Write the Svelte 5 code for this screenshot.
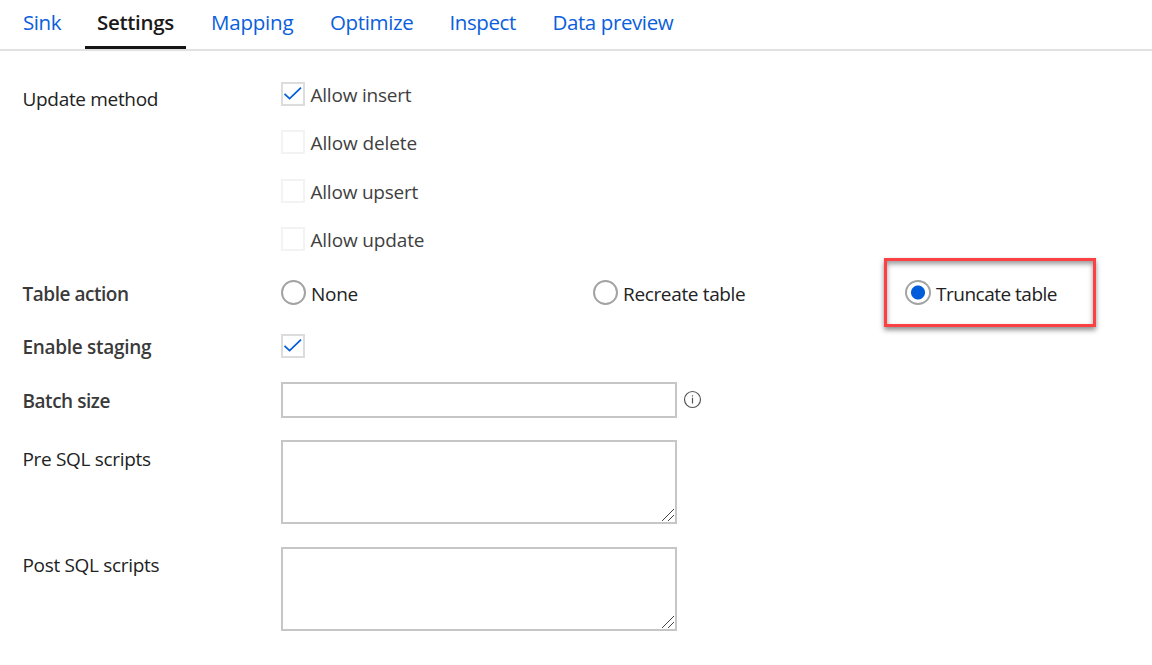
<script>
  const tabs = [
    { name: 'Sink', width: 37, spacing: -0.4 },
    { name: 'Settings', width: 77, spacing: -0.3 },
    { name: 'Mapping', width: 82, spacing: -0.2 },
    { name: 'Optimize', width: 82.5, spacing: -0.35 },
    { name: 'Inspect', width: 66, spacing: -0.4 },
    { name: 'Data preview', width: 121, spacing: -0.4 }
  ];
  const methods = [
    { name: 'Allow insert', on: true, spacing: -0.22 },
    { name: 'Allow delete', on: false, spacing: -0.12 },
    { name: 'Allow upsert', on: false, spacing: -0.22 },
    { name: 'Allow update', on: false, spacing: -0.15 }
  ];
  const actions = [
    { name: 'None', spacing: -0.3 },
    { name: 'Recreate table', spacing: -0.35 },
    { name: 'Truncate table', spacing: -0.5 }
  ];
  let active = $state('Settings');
  let action = $state('Truncate table');
</script>

{#snippet box(on, faint)}
  <span class="box" class:faint>
    {#if on}
      <svg width="20" height="20" viewBox="0 0 20 20"><path d="M1.5 9.8 L6.6 14.6 L18 3.7" fill="none" stroke="#015cda" stroke-width="1.7" /></svg>
    {/if}
  </span>
{/snippet}

{#snippet area()}
  <div class="area">
    <svg width="12" height="12" viewBox="0 0 12 12" shape-rendering="crispEdges"><path d="M0 12 L12 0 M6 12 L12 6" stroke="#444" stroke-width="1" fill="none" /></svg>
  </div>
{/snippet}

<main>
  <nav>
    {#each tabs as tab}
      <button class:active={active === tab.name} onclick={() => (active = tab.name)}>
        <span style:width="{tab.width}px" style:letter-spacing="{tab.spacing}px">{tab.name}</span>
      </button>
    {/each}
  </nav>

  <section>
    <div class="row methods">
      <span class="label update">Update method</span>
      <div class="stack">
        {#each methods as m}
          <div class="check">{@render box(m.on, !m.on)}<span style:letter-spacing="{m.spacing}px">{m.name}</span></div>
        {/each}
      </div>
    </div>
    <div class="row action">
      <span class="label strong">Table action</span>
      <div class="radios">
        {#each actions as a}
          <div class="radio" class:marked={a.name === 'Truncate table'}>
            <span class="circle" class:on={action === a.name}></span><span class="name" style:letter-spacing="{a.spacing}px">{a.name}</span>
          </div>
        {/each}
      </div>
    </div>
    <div class="row staging">
      <span class="label strong wide">Enable staging</span>
      {@render box(true, false)}
    </div>
    <div class="row batch">
      <span class="label strong">Batch size</span>
      <div class="input"></div>
      <svg class="info" width="19" height="19" viewBox="0 0 19 19"><circle cx="9.5" cy="9.5" r="8" fill="none" stroke="#555" stroke-width="1.2" /><path d="M9.5 7.7V13.6M9.5 5.2V6.5" stroke="#555" stroke-width="1.2" /></svg>
    </div>
    <div class="row script">
      <span class="label">Pre SQL scripts</span>
      {@render area()}
    </div>
    <div class="row script">
      <span class="label post">Post SQL scripts</span>
      {@render area()}
    </div>
  </section>
</main>

<style>
  :global(body) { background: #fff; }
  main { width: 1152px; height: 665px; overflow: hidden; font: 19px/26px 'Open Sans', 'Noto Sans', sans-serif; color: #222; letter-spacing: -0.32px; }
  nav { display: flex; box-sizing: border-box; height: 51px; padding-left: 11px; gap: 13px; border-bottom: 2px solid #e1e1e1; }
  button { all: unset; display: flex; align-items: flex-start; box-sizing: border-box; height: 49px; padding: 8px 12px 0; font-size: 20.5px; line-height: 28px; color: #0a60dc; white-space: nowrap; }
  button span { display: block; }
  button.active { color: #1b1a19; font-weight: 600; border-bottom: 3px solid #151515; }
  section { padding-top: 31px; }
  .row { display: flex; align-items: flex-start; padding-left: 22.5px; white-space: nowrap; }
  .label { width: 258.5px; flex: none; }
  .strong { font-weight: 600; color: #3a3a3a; letter-spacing: -0.47px; }
  .methods { height: 198px; }
  .update { padding-top: 4px; }
  .stack { display: grid; grid-template-rows: 48px 49px 48px 48px; }
  .check { display: flex; gap: 5.5px; color: #3f3f3f; }
  .box { box-sizing: border-box; width: 24px; height: 24px; border: 2px solid #dcdcdc; flex: none; }
  .box.faint { border-color: #f3f3f3; }
  .box svg { display: block; }
  .action { height: 54px; }
  .action .label, .name { padding-top: 1px; }
  .radios { display: grid; grid-template-columns: 312px 312px 200px; }
  .radio { position: relative; display: flex; gap: 5px; }
  .circle { box-sizing: border-box; width: 25px; height: 25px; border: 2px solid #a3a3a3; border-radius: 50%; }
  .marked .circle { width: 26px; }
  .circle.on { background: radial-gradient(circle, #015cda 6.5px, transparent 7.5px); }
  .marked::after { content: ''; position: absolute; left: -21px; top: -22px; width: 206px; height: 63px; border: 3px solid #fb4143; box-shadow: 0 3px 5px rgba(0,0,0,.45), inset 0 3px 5px rgba(0,0,0,.4); }
  .staging { height: 48px; }
  .wide { letter-spacing: -0.3px; }
  .batch { height: 58px; }
  .batch .label, .script .label { padding-top: 6px; }
  .input { box-sizing: border-box; width: 396px; height: 36px; border: 2px solid #c6c6c6; }
  .info { margin: 8px 0 0 6px; }
  .script { height: 107px; }
  .script .label.post { padding-top: 5px; }
  .area { box-sizing: border-box; width: 396px; height: 84px; border: 2px solid #c6c6c6; display: flex; align-items: flex-end; justify-content: flex-end; padding: 0 1px 1px 0; }
</style>
